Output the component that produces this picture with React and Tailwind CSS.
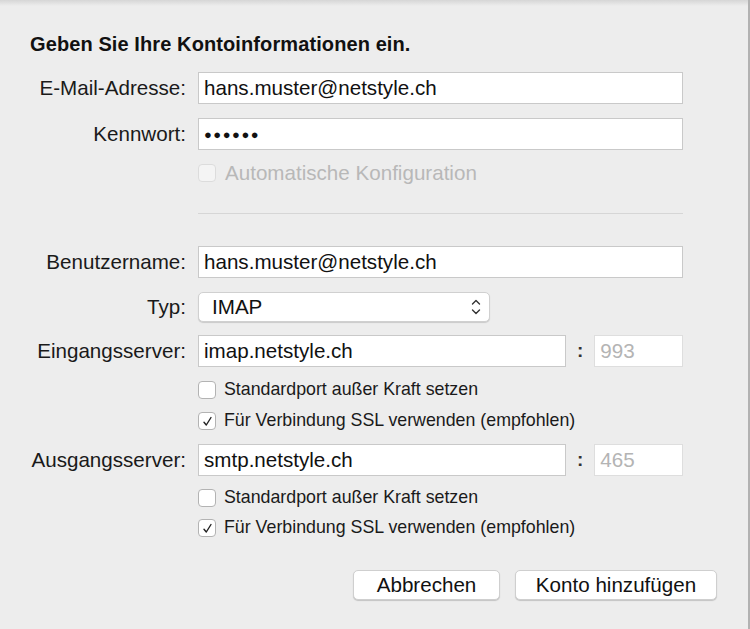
import React from "react";

const font = { fontFamily: '"Liberation Sans", Arial, sans-serif' };

const Field = ({ label, children, className = "" }) => (
  <div className={`flex h-[32px] items-center ${className}`}>
    <div className="w-[186px] shrink-0 text-right text-[20.6px] leading-none text-[#1a1a1a]">{label}</div>
    <div className="ml-[12px] flex items-center">{children}</div>
  </div>
);

const TextBox = ({ value, width, muted, text = "text-[20.6px]" }) => (
  <div
    className={`flex h-[32px] items-center border border-[#c9c9c9] bg-white px-[5px] leading-none ${text} ${
      muted ? "text-[#b4b4b4]" : "text-[#111]"
    } ${width}`}
  >
    {value}
  </div>
);

const Check = ({ label, checked, disabled, className = "" }) => (
  <div className={`ml-[198px] flex h-[18px] items-center ${className}`}>
    <div
      className={`flex h-[18px] w-[18px] shrink-0 items-center justify-center rounded-[4px] border ${
        disabled ? "border-[#dcdcdc] bg-[#f4f4f4]" : "border-[#b3b3b3] bg-white"
      }`}
    >
      {checked && (
        <svg width="11" height="11" viewBox="0 0 11 11">
          <path d="M2 6.2 L4.3 9 L9 1.5" fill="none" stroke="#222" strokeWidth="1.4" strokeLinecap="round" strokeLinejoin="round" />
        </svg>
      )}
    </div>
    <span
      className={`whitespace-nowrap leading-none ${
        disabled ? "ml-[9px] text-[20.6px] text-[#b8b8b8]" : "ml-[8px] text-[17.8px] text-[#1a1a1a]"
      }`}
    >
      {label}
    </span>
  </div>
);

export default function App() {
  return (
    <div className="relative h-[629px] w-[750px] overflow-hidden bg-[#ededed]" style={font}>
      <div className="absolute left-0 right-0 top-0 h-[6px] bg-gradient-to-b from-[#d6d6d6] to-transparent"></div>
      <div className="absolute bottom-0 right-0 top-0 w-[2px] bg-[#b2b2b2]"></div>

      <div className="pt-[33px]">
        <h1 className="ml-[30px] h-[22px] text-[20px] font-bold leading-[22px] tracking-[0.1px] text-[#111]">
          Geben Sie Ihre Kontoinformationen ein.
        </h1>

        <Field label="E-Mail-Adresse:" className="mt-[17px]">
          <TextBox value="hans.muster@netstyle.ch" width="w-[485px]" />
        </Field>
        <Field label="Kennwort:" className="mt-[14px]">
          <TextBox value="●●●●●●" width="w-[485px] tracking-[1.5px]" text="text-[13px]" />
        </Field>
        <Check label="Automatische Konfiguration" disabled className="mt-[14px]" />

        <div className="ml-[198px] mt-[31px] h-[1px] w-[485px] bg-[#d6d6d6]"></div>

        <Field label="Benutzername:" className="mt-[32px]">
          <TextBox value="hans.muster@netstyle.ch" width="w-[485px]" />
        </Field>

        <div className="mt-[14px] flex h-[30px] items-center">
          <div className="w-[186px] shrink-0 text-right text-[20.6px] leading-none text-[#1a1a1a]">Typ:</div>
          <div className="ml-[12px] flex h-[30px] w-[292px] items-center justify-between rounded-[5px] border border-[#d0d0d0] bg-white pl-[13px] pr-[8px] text-[20.6px] leading-none text-[#111] shadow-[0_1px_1px_rgba(0,0,0,0.15)]">
            <span>IMAP</span>
            <svg width="10" height="18" viewBox="0 0 10 18">
              <path d="M1.5 6 L5 2.5 L8.5 6 M1.5 12 L5 15.5 L8.5 12" fill="none" stroke="#333" strokeWidth="1.4" strokeLinecap="round" strokeLinejoin="round" />
            </svg>
          </div>
        </div>

        <Field label="Eingangsserver:" className="mt-[13px]">
          <TextBox value="imap.netstyle.ch" width="w-[368px]" />
          <span className="mx-[11px] text-[19px] font-semibold text-[#333]">:</span>
          <TextBox value="993" width="w-[89px] border-[#dedede]" muted />
        </Field>
        <Check label="Standardport außer Kraft setzen" className="mt-[14px]" />
        <Check label="Für Verbindung SSL verwenden (empfohlen)" checked className="mt-[13px]" />

        <Field label="Ausgangsserver:" className="mt-[14px]">
          <TextBox value="smtp.netstyle.ch" width="w-[368px]" />
          <span className="mx-[11px] text-[19px] font-semibold text-[#333]">:</span>
          <TextBox value="465" width="w-[89px] border-[#dedede]" muted />
        </Field>
        <Check label="Standardport außer Kraft setzen" className="mt-[13px]" />
        <Check label="Für Verbindung SSL verwenden (empfohlen)" checked className="mt-[12px]" />

        <div className="mr-[33px] mt-[33px] flex justify-end gap-[15px]">
          <button className="h-[30px] w-[147px] rounded-[5px] border border-[#cfcfcf] bg-white text-[20.6px] leading-none text-[#111] shadow-[0_1px_1px_rgba(0,0,0,0.18)]">
            Abbrechen
          </button>
          <button className="h-[30px] w-[202px] rounded-[5px] border border-[#cfcfcf] bg-white text-[20.6px] leading-none text-[#111] shadow-[0_1px_1px_rgba(0,0,0,0.18)]">
            Konto hinzufügen
          </button>
        </div>
      </div>
    </div>
  );
}
